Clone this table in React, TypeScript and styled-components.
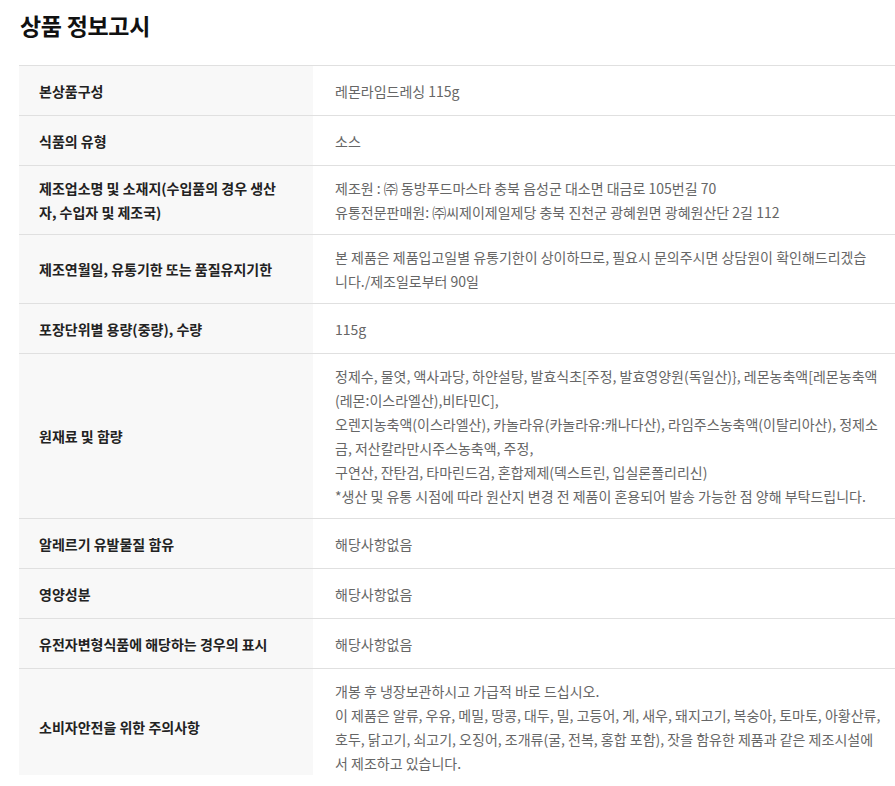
import React, { FC } from 'react';
import styled, { createGlobalStyle } from 'styled-components';

const GlobalStyle = createGlobalStyle`
  html, body {
    margin: 0;
    padding: 0;
    background: #fff;
  }
  body {
    font-family: "Noto Sans CJK KR", "Noto Sans", sans-serif;
    -webkit-font-smoothing: antialiased;
  }
`;

const Section = styled.section`
  width: 876px;
  padding: 10px 0 0 19px;
`;

const Title = styled.h2`
  margin: 0 0 25px 1px;
  font-size: 23px;
  line-height: 30px;
  font-weight: 700;
  color: #111;
  letter-spacing: -0.3px;
`;

const Collapsed = styled.div`
  max-height: 710px;
  overflow: hidden;
`;

const Table = styled.table`
  width: 100%;
  border-collapse: collapse;
  border-top: 1px solid #e0e0e0;
  table-layout: fixed;
`;

const Row = styled.tr`
  border-bottom: 1px solid #e0e0e0;
`;

const Head = styled.th`
  width: 294px;
  box-sizing: border-box;
  height: 50px;
  padding: 10px 28px 10px 20px;
  background: #f8f8f8;
  text-align: left;
  vertical-align: middle;
  font-size: 14px;
  line-height: 24px;
  font-weight: 700;
  color: #222;
`;

const Value = styled.td`
  box-sizing: border-box;
  height: 50px;
  padding: 10px 9px 10px 22px;
  vertical-align: middle;
  font-size: 14px;
  line-height: 24px;
  font-weight: 400;
  color: #666;
`;

interface INotice {
  label: string;
  lines: string[];
}

const notices: INotice[] = [
  { label: '본상품구성', lines: ['레몬라임드레싱 115g'] },
  { label: '식품의 유형', lines: ['소스'] },
  {
    label: '제조업소명 및 소재지(수입품의 경우 생산자, 수입자 및 제조국)',
    lines: [
      '제조원 : ㈜ 동방푸드마스타 충북 음성군 대소면 대금로 105번길 70',
      '유통전문판매원: ㈜씨제이제일제당 충북 진천군 광혜원면 광혜원산단 2길 112',
    ],
  },
  {
    label: '제조연월일, 유통기한 또는 품질유지기한',
    lines: [
      '본 제품은 제품입고일별 유통기한이 상이하므로, 필요시 문의주시면 상담원이 확인해드리겠습',
      '니다./제조일로부터 90일',
    ],
  },
  { label: '포장단위별 용량(중량), 수량', lines: ['115g'] },
  {
    label: '원재료 및 함량',
    lines: [
      '정제수, 물엿, 액사과당, 하얀설탕, 발효식초[주정, 발효영양원(독일산)}, 레몬농축액[레몬농축액',
      '(레몬:이스라엘산),비타민C],',
      '오렌지농축액(이스라엘산), 카놀라유(카놀라유:캐나다산), 라임주스농축액(이탈리아산), 정제소',
      '금, 저산칼라만시주스농축액, 주정,',
      '구연산, 잔탄검, 타마린드검, 혼합제제(덱스트린, 입실론폴리리신)',
      '*생산 및 유통 시점에 따라 원산지 변경 전 제품이 혼용되어 발송 가능한 점 양해 부탁드립니다.',
    ],
  },
  { label: '알레르기 유발물질 함유', lines: ['해당사항없음'] },
  { label: '영양성분', lines: ['해당사항없음'] },
  { label: '유전자변형식품에 해당하는 경우의 표시', lines: ['해당사항없음'] },
  {
    label: '소비자안전을 위한 주의사항',
    lines: [
      '개봉 후 냉장보관하시고 가급적 바로 드십시오.',
      '이 제품은 알류, 우유, 메밀, 땅콩, 대두, 밀, 고등어, 게, 새우, 돼지고기, 복숭아, 토마토, 아황산류,',
      '호두, 닭고기, 쇠고기, 오징어, 조개류(굴, 전복, 홍합 포함), 잣을 함유한 제품과 같은 제조시설에',
      '서 제조하고 있습니다.',
    ],
  },
];

const App: FC = () => (
  <>
    <GlobalStyle />
    <Section>
      <Title>상품 정보고시</Title>
      <Collapsed>
        <Table>
          <tbody>
            {
              notices.map((n, i) => <Row key={i}>
                <Head scope="row">{n.label}</Head>
                <Value>
                  {
                    n.lines.map((line, j) => <React.Fragment key={j}>
                      {j > 0 && <br />}
                      {line}
                    </React.Fragment>)
                  }
                </Value>
              </Row>)
            }
          </tbody>
        </Table>
      </Collapsed>
    </Section>
  </>
);

export default App;
